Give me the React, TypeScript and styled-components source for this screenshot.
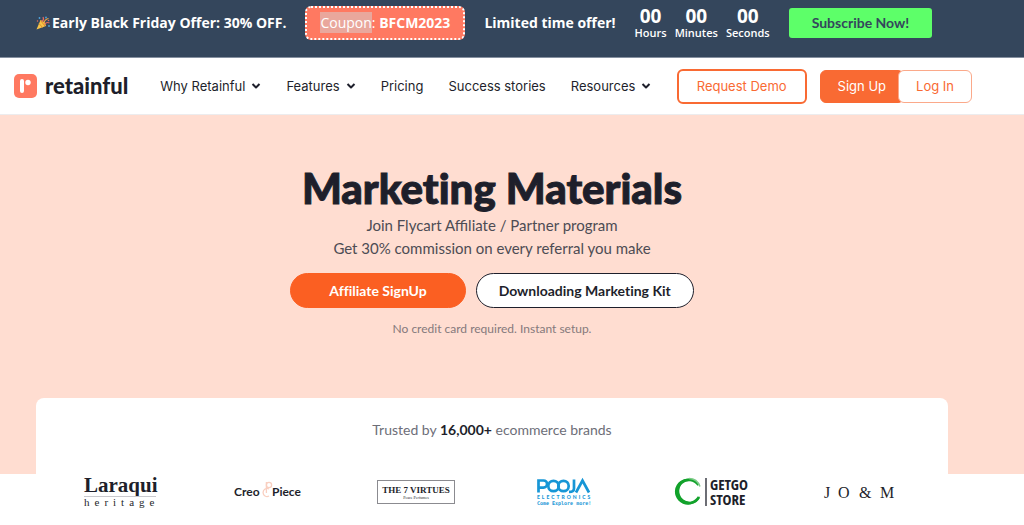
import React from "react";
import styled, { createGlobalStyle, css } from "styled-components";

const color = {
  navy: "#34465c",
  coral: "#ff7961",
  orange: "#f96a33",
  cta: "#fb5f22",
  green: "#5dff69",
  peach: "#ffddd1",
  ink: "#1e1f2b",
  text: "#4d4c54",
  muted: "#85797c",
};

const humanist = `"Open Sans", "Noto Sans", sans-serif`;
const rounded = `Lato, "Liberation Sans", sans-serif`;
const geometric = `Inter, "Liberation Sans", sans-serif`;

const GlobalStyle = createGlobalStyle`
  *, *::before, *::after { box-sizing: border-box; }
  body { margin: 0; background: #fff; color: ${color.ink}; font-family: ${rounded}; }
  h1, p, ul { margin: 0; padding: 0; }
  ul { list-style: none; }
  a { color: inherit; text-decoration: none; }
  button { font: inherit; cursor: pointer; white-space: nowrap; }
`;

/* Promotion bar */

const PromoBar = styled.aside`
  display: flex;
  align-items: flex-start;
  gap: 19px;
  min-height: 58px;
  padding: 6px 36px 0;
  background: ${color.navy};
  border-bottom: 1px solid #8590a0;
  color: #fff;
  font-family: ${humanist};
  font-size: 14px;
  line-height: 34px;
  white-space: nowrap;
`;

const PromoText = styled.p`
  display: flex;
  align-items: center;
  gap: 2px;
  height: 33px;
  font-weight: 700;
`;

const Coupon = styled.p`
  padding: 0 13px;
  border: 2px dotted #fff;
  border-radius: 6px;
  background: ${color.coral};
  line-height: 30px;

  mark {
    padding: 1px 0;
    background: #e9a79c;
    color: #fff;
  }
`;

const Countdown = styled.ul`
  display: flex;
  gap: 8px;
  text-align: center;
`;

const TimeUnit = styled.li`
  display: flex;
  flex-direction: column;
  font-size: 11px;
  font-weight: 600;
  line-height: 12px;

  strong {
    font-size: 19px;
    font-weight: 700;
    line-height: 21px;
  }
`;

const SubscribeButton = styled.button`
  height: 30px;
  margin-top: 2px;
  padding: 0 23px;
  border: 0;
  border-radius: 3px;
  background: ${color.green};
  color: ${color.navy};
  font-family: ${rounded};
  font-size: 14px;
  font-weight: 700;
  line-height: 28px;
`;

/* Header */

const Header = styled.header`
  display: flex;
  align-items: center;
  height: 57px;
  padding: 0 52px 0 14px;
  border-bottom: 1px solid #ececee;
  font-family: ${geometric};
  font-size: 13px;
  white-space: nowrap;
`;

const Brand = styled.a`
  display: flex;
  align-items: center;
  gap: 8px;
  margin-right: 32px;
  font-family: ${rounded};
  font-size: 22px;
  font-weight: 900;
  line-height: 24px;
`;

const NavList = styled.ul`
  display: flex;
  gap: 25px;
`;

const NavLink = styled.a`
  display: flex;
  align-items: center;
  gap: 6px;
`;

const Actions = styled.div`
  display: flex;
  align-items: center;
  margin-left: auto;
`;

const HeaderButton = styled.button<{ $kind: "demo" | "signup" | "login" }>`
  height: 33px;
  padding: 0 17px;
  border: 1px solid ${color.orange};
  border-radius: 6px;
  background: #fff;
  color: ${color.orange};

  ${({ $kind }) =>
    $kind === "demo" &&
    css`
      height: 35px;
      padding: 0 18px;
      margin-right: 13px;
      border-width: 2px;
    `}
  ${({ $kind }) =>
    $kind === "signup" &&
    css`
      background: ${color.orange};
      color: #fff;
    `}
  ${({ $kind }) =>
    $kind === "login" &&
    css`
      margin-left: -6px;
      border-color: #fba98a;
    `}
`;

/* Hero */

const Hero = styled.section`
  display: flex;
  flex-direction: column;
  align-items: center;
  padding: 47px 40px 136px 0;
  background: ${color.peach};
  text-align: center;
`;

const Title = styled.h1`
  font-size: 42px;
  font-weight: 900;
  font-variant-ligatures: none;
  line-height: 52px;
  -webkit-text-stroke: 1px ${color.ink};
`;

const Lead = styled.p`
  color: ${color.text};
  font-size: 15px;
  line-height: 23px;
`;

const ButtonRow = styled.div`
  display: flex;
  gap: 10px;
  margin: 13px 0 12px;
`;

const PillButton = styled.button<{ $primary?: boolean }>`
  height: 35px;
  padding: 0 ${({ $primary }) => ($primary ? 38 : 22)}px;
  border: 1px solid ${({ $primary }) => ($primary ? color.cta : color.ink)};
  border-radius: 18px;
  background: ${({ $primary }) => ($primary ? color.cta : "#fff")};
  color: ${({ $primary }) => ($primary ? "#fff" : color.ink)};
  font-size: 14px;
  font-variant-ligatures: none;
  font-weight: 700;
`;

const Note = styled.p`
  color: ${color.muted};
  font-size: 12px;
  line-height: 18px;
`;

/* Trusted brands */

const BrandsCard = styled.section`
  margin: -76px 76px 0 36px;
  padding-top: 22px;
  border-radius: 8px;
  background: #fff;
  text-align: center;
`;

const BrandsTitle = styled.p`
  color: #6d6e78;
  font-size: 14px;
  line-height: 20px;

  strong {
    color: ${color.ink};
  }
`;

const LogoGrid = styled.ul`
  display: grid;
  grid-template-columns: repeat(6, 1fr);
  justify-items: center;
  margin: 32px 14px 0 10px;

  svg {
    display: block;
  }
`;

function PartyIcon() {
  return (
    <svg width="14" height="14" viewBox="0 0 28 28" aria-hidden="true">
      <path d="M1 27 9 8q10 3 11 12z" fill="#f7c34a" />
      <path d="m6 15 7 8M9 9l9 11" stroke="#dc9129" strokeWidth="2" />
      <path d="M12 11q5-4 2-9M17 17q4-6 10-3" fill="none" stroke="#e8695c" strokeWidth="2.4" />
      <path d="M16 14q1-7 9-9" fill="none" stroke="#f5a93d" strokeWidth="2.2" />
      <g fill="#4ea4df">
        <circle cx="7" cy="4" r="1.8" />
        <circle cx="20" cy="3" r="1.8" />
        <circle cx="26" cy="20" r="1.8" />
      </g>
      <circle cx="3" cy="10" r="1.5" fill="#e8695c" />
      <circle cx="25" cy="9" r="1.6" fill="#e8695c" />
    </svg>
  );
}

function BrandMark() {
  return (
    <svg width="23" height="24" viewBox="0 0 23 24" aria-hidden="true">
      <rect width="23" height="24" rx="5" fill={color.coral} />
      <rect x="6" y="5" width="4" height="14" rx="2" fill="#fff" />
      <circle cx="14" cy="8.5" r="2.7" fill="#fff" />
    </svg>
  );
}

function Chevron() {
  return (
    <svg width="10" height="8" viewBox="0 0 10 8" aria-hidden="true">
      <path d="m1.5 2 3.5 3.5L8.5 2" fill="none" stroke={color.ink} strokeWidth="2" strokeLinejoin="round" />
    </svg>
  );
}

function LaraquiLogo() {
  return (
    <svg width="80" height="40" viewBox="0 0 80 40" fill={color.ink} fontFamily='"Liberation Serif", serif'>
      <text x="4" y="20" fontSize="21" fontWeight="700">Laraqui</text>
      <path d="M4 24.5h72" stroke="#c9c9ce" strokeWidth="1" />
      <text x="4" y="34" fontSize="11" letterSpacing="5">heritage</text>
    </svg>
  );
}

function CreoLogo() {
  return (
    <svg width="72" height="40" viewBox="0 0 72 40" fill={color.ink} fontFamily={rounded}>
      <text x="2" y="24" fontSize="12" fontWeight="700">Creo</text>
      <g fill="none" stroke="#f9cfc0" strokeWidth="1.3">
        <circle cx="37" cy="13" r="2.6" />
        <path d="M34.4 10v11M37 17a4 4 0 1 0 0 7" />
      </g>
      <text x="40" y="24" fontSize="12" fontWeight="700">Piece</text>
    </svg>
  );
}

function VirtuesLogo() {
  return (
    <svg width="78" height="40" viewBox="0 0 78 40" fill={color.ink} fontFamily='"Liberation Serif", serif' textAnchor="middle">
      <rect x="0.5" y="8.5" width="77" height="23" fill="#fff" stroke="#8b8b90" />
      <text x="39" y="21" fontSize="9" fontWeight="700">THE 7 VIRTUES</text>
      <text x="39" y="27" fontSize="4">Peace Perfumes</text>
    </svg>
  );
}

function PoojaLogo() {
  return (
    <svg width="56" height="40" viewBox="0 0 56 40" fill="#1796d6" fontFamily={rounded}>
      <g fill="none" stroke="#1796d6" strokeWidth="2.7">
        <path d="M2.5 20.500V8.500h5a3.600 3.600 0 0 1 0 7.200h-5" />
        <circle cx="17.500" cy="14" r="5.200" />
        <circle cx="27.500" cy="14" r="5.200" />
        <path d="M38 7.500v9q0 3.500-5 3.300M40 20.500l6.500-12L53 20.500" />
      </g>
      <text x="1" y="27" fontSize="5" fontWeight="900" letterSpacing="2">ELECTRONICS</text>
      <text x="1" y="33" fontSize="5" fontWeight="900" fontFamily='"DejaVu Sans Mono", monospace'>Come Explore more!</text>
    </svg>
  );
}

function GetgoLogo() {
  return (
    <svg width="76" height="40" viewBox="0 0 76 40">
      <path d="M22 9.500A13 13 0 1 0 26.500 23A11 11 0 1 1 22 9.500z" fill="#12a22b" />
      <path d="M24.500 13A11.500 11.500 0 1 0 25 25" fill="none" stroke="#12a22b" strokeWidth="2.600" />
      <path d="M15 6.500q8 0 11 8" fill="none" stroke="#7ccb87" strokeWidth="1.500" />
      <path d="M32 6v28" stroke={color.ink} strokeWidth="1.300" />
      <g fill={color.ink} fontFamily='"Open Sans Condensed", "DejaVu Sans Condensed", sans-serif' fontWeight="700" fontSize="15">
        <text x="36" y="18">GETGO</text>
        <text x="36" y="33">STORE</text>
      </g>
    </svg>
  );
}

function JomLogo() {
  return (
    <svg width="74" height="40" viewBox="0 0 74 40" fill={color.ink} fontFamily='"Liberation Serif", serif' fontSize="16">
      <text x="1" y="26">J</text>
      <text x="15" y="26">O</text>
      <text x="36" y="26">&amp;</text>
      <text x="57" y="26">M</text>
    </svg>
  );
}

const navItems = [
  { label: "Why Retainful", menu: true },
  { label: "Features", menu: true },
  { label: "Pricing", menu: false },
  { label: "Success stories", menu: false },
  { label: "Resources", menu: true },
];

const timeUnits = ["Hours", "Minutes", "Seconds"];

const logos = [LaraquiLogo, CreoLogo, VirtuesLogo, PoojaLogo, GetgoLogo, JomLogo];

export default function App() {
  return (
    <>
      <GlobalStyle />
      <PromoBar>
        <PromoText>
          <PartyIcon />
          Early Black Friday Offer: 30% OFF.
        </PromoText>
        <Coupon>
          <mark>Coupon</mark>: <strong>BFCM2023</strong>
        </Coupon>
        <PromoText>Limited time offer!</PromoText>
        <Countdown>
          {timeUnits.map((unit) => (
            <TimeUnit key={unit}>
              <strong>00</strong>
              {unit}
            </TimeUnit>
          ))}
        </Countdown>
        <SubscribeButton>Subscribe Now!</SubscribeButton>
      </PromoBar>

      <Header>
        <Brand href="#">
          <BrandMark />
          retainful
        </Brand>
        <nav>
          <NavList>
            {navItems.map(({ label, menu }) => (
              <li key={label}>
                <NavLink href="#">
                  {label}
                  {menu && <Chevron />}
                </NavLink>
              </li>
            ))}
          </NavList>
        </nav>
        <Actions>
          <HeaderButton $kind="demo">Request Demo</HeaderButton>
          <HeaderButton $kind="signup">Sign Up</HeaderButton>
          <HeaderButton $kind="login">Log In</HeaderButton>
        </Actions>
      </Header>

      <main>
        <Hero>
          <Title>Marketing Materials</Title>
          <Lead>Join Flycart Affiliate / Partner program</Lead>
          <Lead>Get 30% commission on every referral you make</Lead>
          <ButtonRow>
            <PillButton $primary>Affiliate SignUp</PillButton>
            <PillButton>Downloading Marketing Kit</PillButton>
          </ButtonRow>
          <Note>No credit card required. Instant setup.</Note>
        </Hero>
        <BrandsCard>
          <BrandsTitle>
            Trusted by <strong>16,000+</strong> ecommerce brands
          </BrandsTitle>
          <LogoGrid>
            {logos.map((Logo) => (
              <li key={Logo.name}>
                <Logo />
              </li>
            ))}
          </LogoGrid>
        </BrandsCard>
      </main>
    </>
  );
}
